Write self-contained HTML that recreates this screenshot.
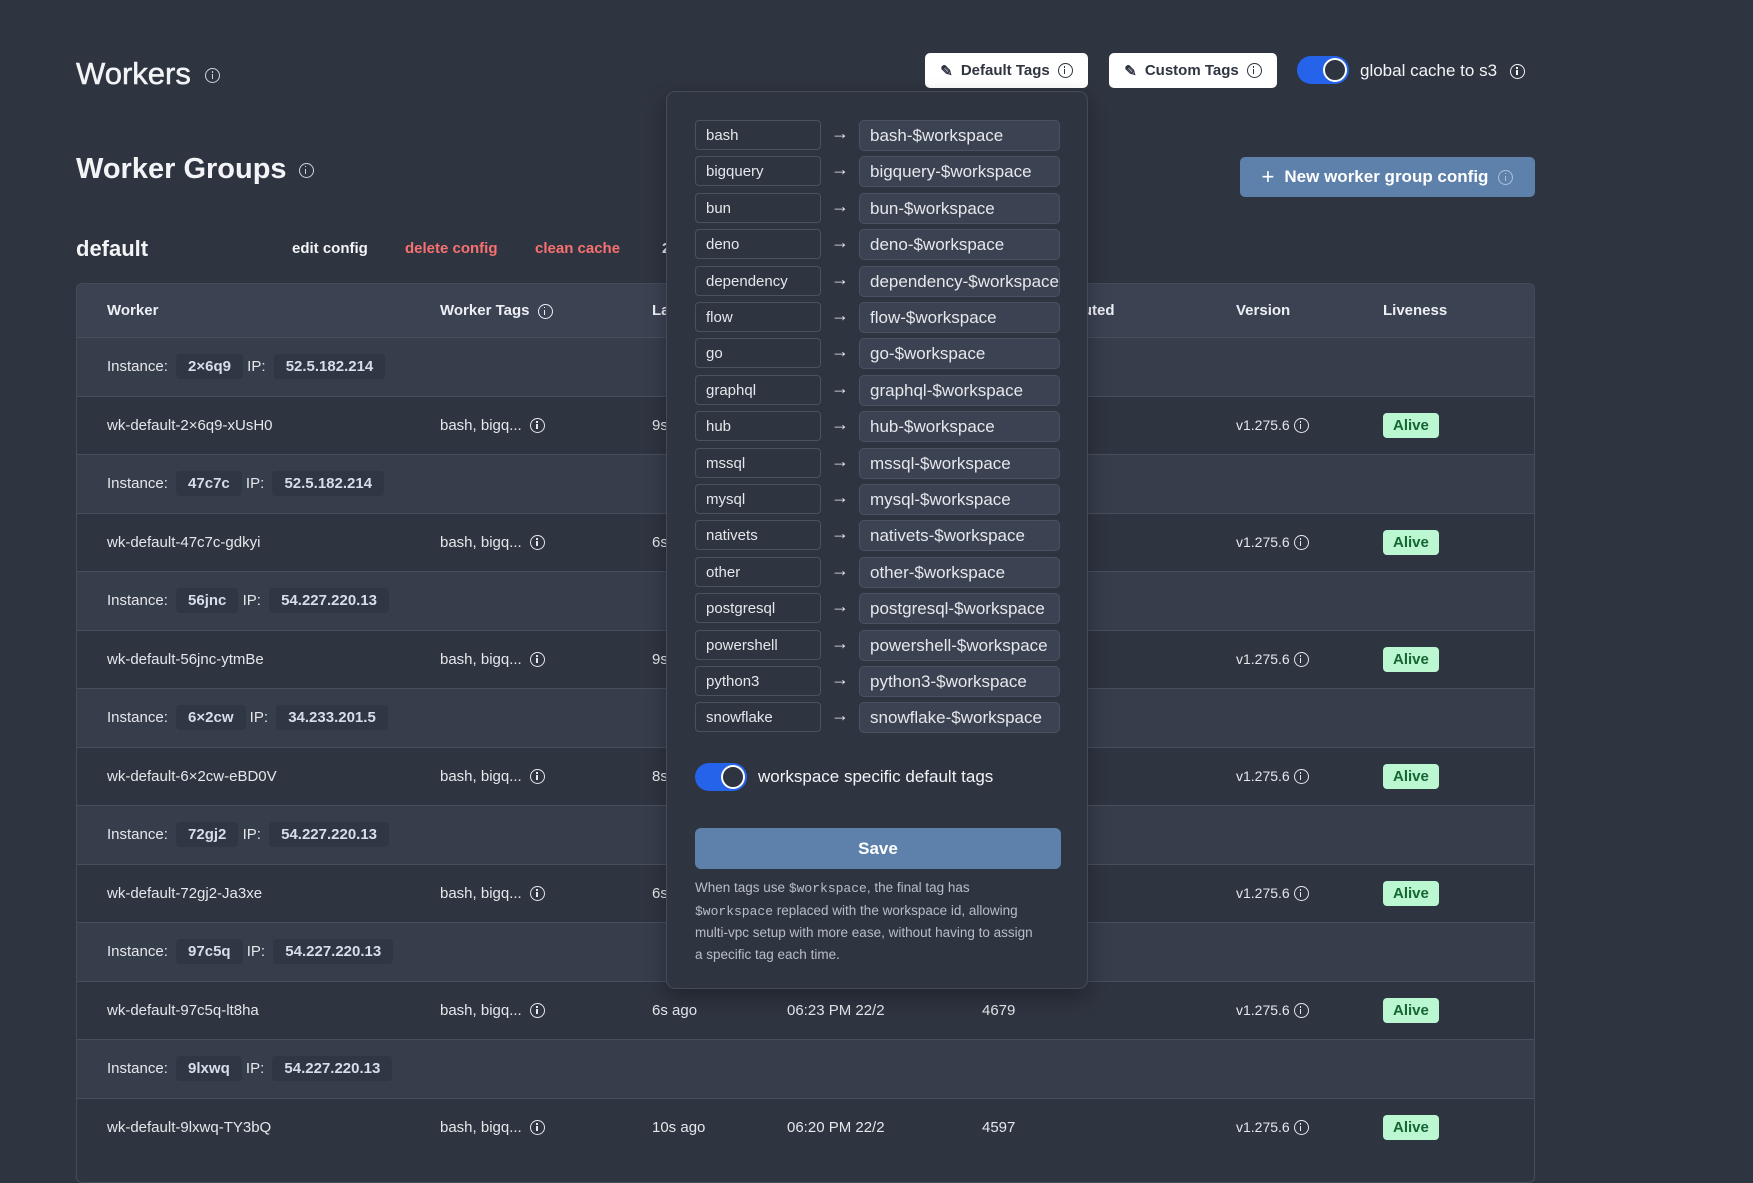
<!DOCTYPE html>
<html><head><meta charset="utf-8"><style>
*{box-sizing:border-box;margin:0;padding:0}
body{width:1753px;height:1140px;overflow:hidden;background:#2e3440;font-family:"Liberation Sans",sans-serif;color:#e5e7eb;position:relative}
.a{position:absolute;white-space:nowrap}
.info{display:inline-block;width:15px;height:15px;border:1.5px solid currentColor;border-radius:50%;position:relative;vertical-align:middle}
.info:after{content:"";position:absolute;left:5.25px;top:5px;width:1.5px;height:5px;background:currentColor}
.info:before{content:"";position:absolute;left:5.25px;top:2px;width:1.5px;height:1.5px;background:currentColor}
.btnw{background:#fff;color:#2e3440;border-radius:5px;font-size:15px;font-weight:bold;display:flex;align-items:center;justify-content:center;gap:8px}
.tog{background:#2563eb;border-radius:14px}
.tog i{position:absolute;right:3px;top:3px;border-radius:50%;background:#2e3440;border:2px solid #fff}
.table{position:absolute;left:76px;top:283px;width:1459px;height:900px;border:1px solid #444c5a;border-radius:6px;overflow:hidden}
.hdr{position:absolute;left:0;top:0;width:100%;height:53px;background:#3b4252;font-weight:bold;font-size:15px;color:#eceff4}
.row{position:absolute;left:0;width:100%;height:58.5px;border-top:1px solid #474f5e;font-size:15px;color:#e5e7eb}
.inst{background:#363d4b}
.chip{display:inline-block;background:#2f3644;border-radius:4px;padding:4px 12px;font-weight:bold;color:#d8dee9}
.alive{background:#bbf7d0;color:#166534;font-weight:bold;border-radius:4px;padding:4px 10px;font-size:15px}
.pop{position:absolute;left:666px;top:91px;width:422px;height:898px;background:#2e3440;border:1px solid #434b59;border-radius:9px;box-shadow:0 8px 20px rgba(0,0,0,.3)}
.k{position:absolute;left:28px;width:126px;height:30px;border:1px solid #4a5261;border-radius:4px;font-size:15px;padding:6px 10px;color:#e5e7eb}
.v{position:absolute;left:192px;width:201px;height:31px;background:#3b4252;border:1px solid #4a5261;border-radius:5px;font-size:17px;padding:5px 10px;color:#e5e7eb;overflow:hidden;white-space:nowrap}
.ar{position:absolute;left:164px;font-size:18px;color:#e5e7eb}
code{font-family:"Liberation Mono",monospace;font-size:13px}
</style></head><body>
<div class="a" style="left:76px;top:56px;font-size:31px;color:#f3f4f6;-webkit-text-stroke:0.5px #f3f4f6">Workers <span class="info" style="margin-left:6px;color:#cbd5e1;-webkit-text-stroke:0"></span></div>
<div class="a" style="left:76px;top:153px;font-size:29px;font-weight:bold;color:#f3f4f6">Worker Groups <span class="info" style="margin-left:4px;color:#cbd5e1"></span></div>
<div class="a" style="left:76px;top:236px;font-size:22px;font-weight:bold;color:#f3f4f6">default</div>
<div class="a" style="left:292px;top:240px;font-size:15px;font-weight:bold;color:#f3f4f6">edit config</div>
<div class="a" style="left:405px;top:240px;font-size:15px;font-weight:bold;color:#f87171">delete config</div>
<div class="a" style="left:535px;top:240px;font-size:15px;font-weight:bold;color:#f87171">clean cache</div>
<div class="a" style="left:662px;top:240px;font-size:15px;font-weight:bold">2 workers</div>

<div class="a btnw" style="left:925px;top:53px;width:163px;height:35px"><span>✎</span>Default Tags <span class="info"></span></div>
<div class="a btnw" style="left:1109px;top:53px;width:168px;height:35px"><span>✎</span>Custom Tags <span class="info"></span></div>
<div class="a tog" style="left:1297px;top:56px;width:52px;height:28px"><i style="width:24px;height:24px;top:2px;right:2px"></i></div>
<div class="a" style="left:1360px;top:61px;font-size:17px;color:#f3f4f6">global cache to s3 <span class="info" style="margin-left:8px"></span></div>
<div class="a" style="left:1240px;top:157px;width:295px;height:40px;background:#5e81ac;border-radius:5px;font-size:17px;font-weight:bold;color:#fff;display:flex;align-items:center;justify-content:center;gap:10px"><span style="font-size:22px;font-weight:normal">+</span>New worker group config <span class="info" style="opacity:.5"></span></div>

<div class="table">
<div class="hdr">
<div class="a" style="left:30px;top:18px">Worker</div>
<div class="a" style="left:363px;top:18px">Worker Tags <span class="info" style="margin-left:4px"></span></div>
<div class="a" style="left:575px;top:18px">Last ping</div>
<div class="a" style="left:710px;top:18px">Worker start</div>
<div class="a" style="left:895px;top:18px">Nb of jobs executed</div>
<div class="a" style="left:1159px;top:18px">Version</div>
<div class="a" style="left:1306px;top:18px">Liveness</div>
</div>
<div id="rows"></div>
</div>

<div class="pop">
<div id="tags"></div>
<div class="a tog" style="left:28px;top:671px;width:52px;height:28px"><i style="width:24px;height:24px;top:2px;right:2px"></i></div>
<div class="a" style="left:91px;top:685px;font-size:17px;color:#f3f4f6;transform:translateY(-50%)">workspace specific default tags</div>
<div class="a" style="left:28px;top:736px;width:366px;height:41px;background:#5e81ac;border-radius:6px;color:#fff;font-weight:bold;font-size:17px;display:flex;align-items:center;justify-content:center">Save</div>
<div class="a" style="left:28px;top:785px;font-size:13.5px;line-height:21.5px;color:#b8bec9">When tags use <code>$workspace</code>, the final tag has<br><code>$workspace</code> replaced with the workspace id, allowing<br>multi-vpc setup with more ease, without having to assign<br>a specific tag each time.</div>
</div>

<script>
var d=[["2×6q9","52.5.182.214","wk-default-2×6q9-xUsH0","9s ago","06:21 PM 22/2","4701"],
["47c7c","52.5.182.214","wk-default-47c7c-gdkyi","6s ago","06:22 PM 22/2","4688"],
["56jnc","54.227.220.13","wk-default-56jnc-ytmBe","9s ago","06:21 PM 22/2","4655"],
["6×2cw","34.233.201.5","wk-default-6×2cw-eBD0V","8s ago","06:22 PM 22/2","4612"],
["72gj2","54.227.220.13","wk-default-72gj2-Ja3xe","6s ago","06:23 PM 22/2","4690"],
["97c5q","54.227.220.13","wk-default-97c5q-lt8ha","6s ago","06:23 PM 22/2","4679"],
["9lxwq","54.227.220.13","wk-default-9lxwq-TY3bQ","10s ago","06:20 PM 22/2","4597"]];
var h="";d.forEach(function(r,i){var t=53+i*117;
h+='<div class="row inst" style="top:'+t+'px"><div class="a" style="left:30px;top:16px">Instance: <span class="chip" style="margin-left:4px">'+r[0]+'</span> IP: <span class="chip" style="margin-left:4px">'+r[1]+'</span></div></div>';
h+='<div class="row" style="top:'+(t+58.5)+'px"><div class="a" style="left:30px;top:20px">'+r[2]+'</div><div class="a" style="left:363px;top:20px">bash, bigq... <span class="info" style="margin-left:4px"></span></div><div class="a" style="left:575px;top:20px">'+r[3]+'</div><div class="a" style="left:710px;top:20px">'+r[4]+'</div><div class="a" style="left:905px;top:20px">'+r[5]+'</div><div class="a" style="left:1159px;top:20px;font-size:14px">v1.275.6 <span class="info"></span></div><div class="a" style="left:1306px;top:20px"><span class="alive">Alive</span></div></div>';});
document.getElementById("rows").innerHTML=h;
var tg=["bash","bigquery","bun","deno","dependency","flow","go","graphql","hub","mssql","mysql","nativets","other","postgresql","powershell","python3","snowflake"];
var s="";tg.forEach(function(n,i){var y=28+i*36.4;
s+='<div class="k" style="top:'+y+'px">'+n+'</div><div class="ar" style="top:'+(y+3)+'px">→</div><div class="v" style="top:'+y+'px">'+n+'-$workspace</div>';});
document.getElementById("tags").innerHTML=s;
</script>
</body></html>
